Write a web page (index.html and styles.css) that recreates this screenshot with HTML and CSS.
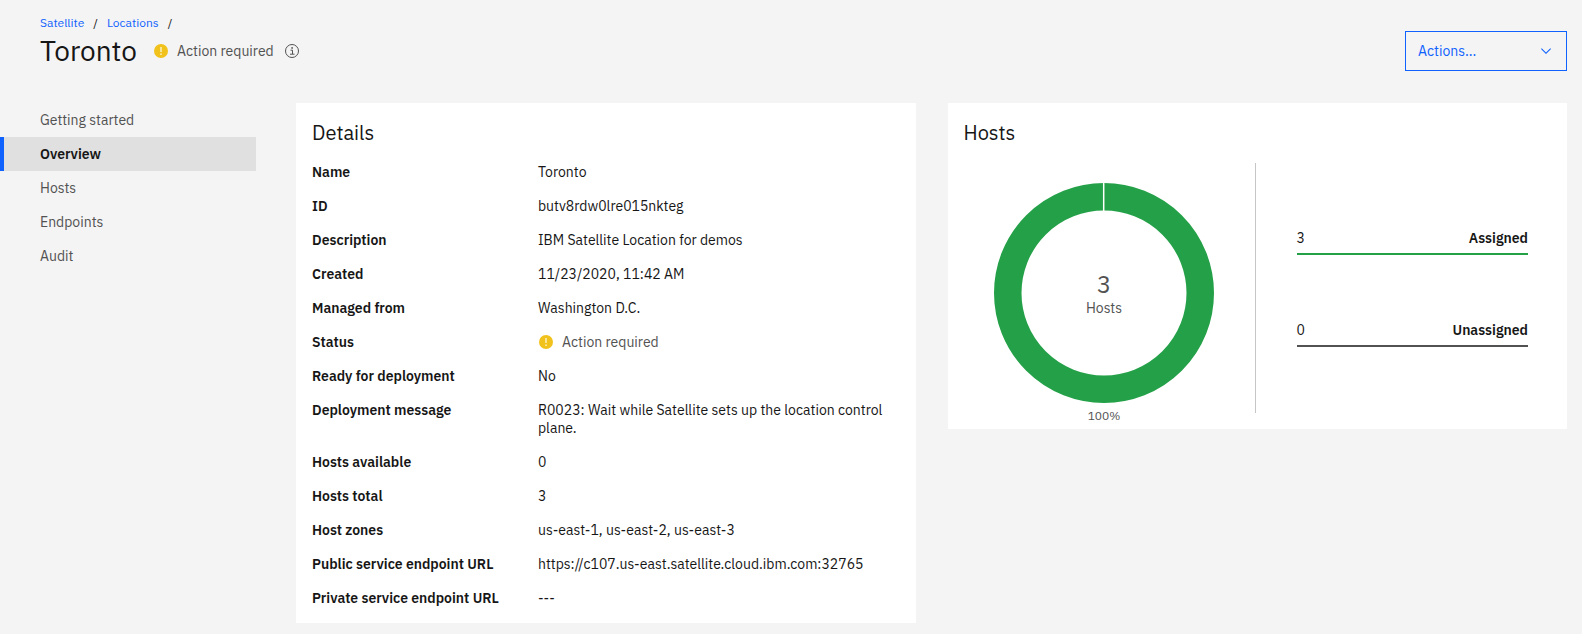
FILE: index.html
```html
<!DOCTYPE html>
<html lang="en">
<head>
<meta charset="utf-8">
<meta name="viewport" content="width=device-width, initial-scale=1">
<title>Toronto - Satellite location</title>
<link rel="stylesheet" href="styles.css">
</head>
<body>
<header class="page-header">
  <div>
    <nav class="breadcrumb" aria-label="Breadcrumb">
      <a href="#satellite">Satellite</a><span>/</span><a href="#locations">Locations</a><span>/</span>
    </nav>
    <div class="title-row">
      <h1 class="page-title">Toronto</h1>
      <span class="status">
        <svg class="icon" viewBox="0 0 16 16" aria-hidden="true"><circle cx="8" cy="8" r="7" fill="#f1c21b"/><path d="M7.2 4h1.6v5H7.2z" fill="#fbeeb8"/><circle cx="8" cy="11.2" r=".9" fill="#fbeeb8"/></svg>
        Action required
      </span>
      <button class="info-button" type="button" aria-label="More information">
        <svg class="icon" viewBox="0 0 16 16" aria-hidden="true"><circle cx="8" cy="8" r="6.5" fill="none" stroke="#525252"/><path d="M6.5 7.2H8.5V11M6 11.2H10.5" fill="none" stroke="#525252"/><circle cx="8.1" cy="4.9" r=".9" fill="#525252"/></svg>
      </button>
    </div>
  </div>
  <div class="actions">
    <select class="actions-select" aria-label="Actions">
      <option>Actions...</option>
    </select>
    <svg class="chevron" viewBox="0 0 16 16" aria-hidden="true"><path d="M8 11L3 6l.7-.7L8 9.6l4.3-4.3.7.7z" fill="#0f62fe"/></svg>
  </div>
</header>
<div class="layout">
  <nav class="side-nav" aria-label="Location">
    <a class="side-link" href="#start">Getting started</a>
    <a class="side-link side-link-active" href="#overview" aria-current="page">Overview</a>
    <a class="side-link" href="#hosts">Hosts</a>
    <a class="side-link" href="#endpoints">Endpoints</a>
    <a class="side-link" href="#audit">Audit</a>
  </nav>
  <main class="cards">
    <section class="card">
      <h2 class="card-title">Details</h2>
      <dl class="details">
        <dt>Name</dt><dd>Toronto</dd>
        <dt>ID</dt><dd>butv8rdw0lre015nkteg</dd>
        <dt>Description</dt><dd>IBM Satellite Location for demos</dd>
        <dt>Created</dt><dd>11/23/2020, 11:42 AM</dd>
        <dt>Managed from</dt><dd>Washington D.C.</dd>
        <dt>Status</dt>
        <dd><span class="status">
          <svg class="icon" viewBox="0 0 16 16" aria-hidden="true"><circle cx="8" cy="8" r="7" fill="#f1c21b"/><path d="M7.2 4h1.6v5H7.2z" fill="#fbeeb8"/><circle cx="8" cy="11.2" r=".9" fill="#fbeeb8"/></svg>
          Action required
        </span></dd>
        <dt>Ready for deployment</dt><dd>No</dd>
        <dt>Deployment message</dt><dd>R0023: Wait while Satellite sets up the location control plane.</dd>
        <dt>Hosts available</dt><dd>0</dd>
        <dt>Hosts total</dt><dd>3</dd>
        <dt>Host zones</dt><dd>us-east-1, us-east-2, us-east-3</dd>
        <dt>Public service endpoint URL</dt><dd>https://c107.us-east.satellite.cloud.ibm.com:32765</dd>
        <dt>Private service endpoint URL</dt><dd>---</dd>
      </dl>
    </section>
    <section class="card">
      <h2 class="card-title">Hosts</h2>
      <div class="hosts">
        <svg class="donut" viewBox="0 0 280 250" role="img" aria-label="3 hosts, 100% assigned">
          <circle cx="140" cy="130" r="96.25" fill="none" stroke="#24a148" stroke-width="27.5"/>
          <path d="M139.7 19v30" stroke="#fff" stroke-width="1.5"/>
          <text class="donut-value" x="140" y="130">3</text>
          <text class="donut-label" x="140" y="150">Hosts</text>
          <text class="donut-percent" x="140" y="257">100%</text>
        </svg>
        <ul class="legend">
          <li class="legend-row legend-assigned"><span>3</span><strong>Assigned</strong></li>
          <li class="legend-row legend-unassigned"><span>0</span><strong>Unassigned</strong></li>
        </ul>
      </div>
    </section>
  </main>
</div>
</body>
</html>
```
FILE: styles.css
```css
* { box-sizing: border-box; }

body {
  margin: 0;
  background: #f4f4f4;
  color: #161616;
  font-family: "IBM Plex Sans", "Noto Sans", sans-serif;
  font-size: 14px;
  line-height: 18px;
}

h1, h2, dl, dd, ul { margin: 0; padding: 0; }

.page-header {
  display: flex;
  justify-content: space-between;
  align-items: flex-start;
  padding: 15px 15px 32px 40px;
}

.breadcrumb {
  display: flex;
  gap: 9px;
  font-size: 12px;
  line-height: 16px;
}

.breadcrumb a { color: #0f62fe; text-decoration: none; }

.title-row { display: flex; align-items: center; line-height: 40px; }

.page-title { font-size: 28px; font-weight: 400; line-height: 40px; }

.status { display: inline-flex; align-items: center; gap: 8px; color: #525252; }

.title-row .status { margin-left: 16px; }

.icon { display: block; width: 16px; height: 16px; }

.info-button { margin: 0 0 0 10px; padding: 0; border: 0; background: none; }

.actions { display: grid; width: 162px; margin-top: 16px; align-items: center; }

.actions-select, .chevron { grid-area: 1 / 1; }

.actions-select {
  appearance: none;
  height: 40px;
  padding: 0 40px 0 12px;
  border: 1px solid #0f62fe;
  border-radius: 0;
  background: transparent;
  color: #0f62fe;
  font: inherit;
}

.chevron { width: 16px; height: 16px; margin-right: 13px; justify-self: end; pointer-events: none; }

.layout { display: grid; grid-template-columns: 256px 1fr; gap: 40px; padding-right: 15px; }

.side-link {
  display: block;
  padding: 8px 16px 8px 36px;
  border-left: 4px solid transparent;
  color: #525252;
  text-decoration: none;
}

.side-link-active { border-color: #0f62fe; background: #e0e0e0; color: #161616; font-weight: 600; }

.cards { display: grid; grid-template-columns: 1fr 1fr; gap: 32px; align-items: start; }

.card { min-width: 0; padding: 16px; background: #fff; }

.card-title { margin-bottom: 16px; font-size: 20px; font-weight: 400; line-height: 28px; }

.details { display: grid; grid-template-columns: 210px 1fr; gap: 16px; }

dt, strong { font-weight: 600; }

.details .status { vertical-align: top; height: 18px; }

.hosts { display: flex; }

.donut { width: 280px; height: 250px; margin-right: 11px; flex: none; overflow: visible; fill: #525252; text-anchor: middle; }

.donut-value { font-size: 24px; }

.donut-label { font-size: 14px; }

.donut-percent { font-size: 12px; }

.legend {
  display: flex;
  flex: 1;
  flex-direction: column;
  justify-content: space-evenly;
  padding: 0 23px 0 41px;
  border-left: 1px solid #c6c6c6;
  list-style: none;
}

.legend-row { display: flex; justify-content: space-between; padding-bottom: 6px; border-bottom: 2px solid; }

.legend-assigned { border-color: #24a148; }

.legend-unassigned { border-color: #525252; }
```
